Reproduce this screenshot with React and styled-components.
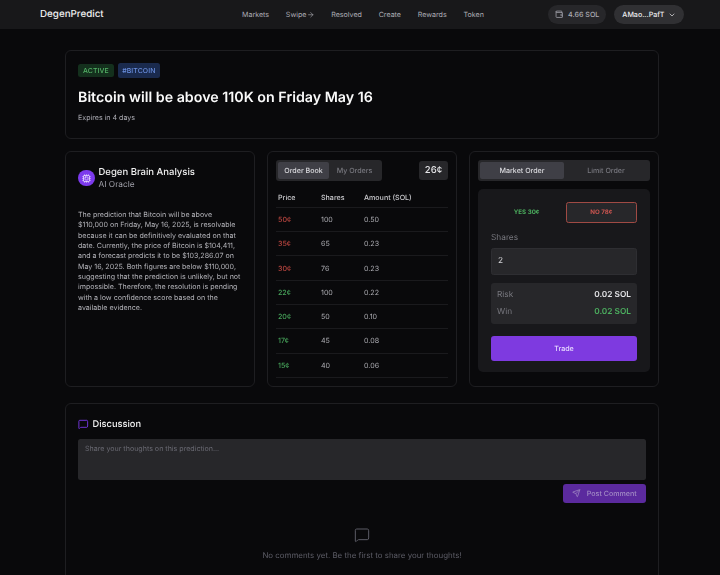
import React from "react";
import styled, { createGlobalStyle } from "styled-components";
import { Wallet, ChevronDown, Cpu, MessageSquare, Send, ArrowRight } from "lucide-react";

const Global = createGlobalStyle`
  html, body { margin: 0; padding: 0; background: #09090b; height: 100%; overflow: hidden; }
  * { box-sizing: border-box; }
  body { font-family: Inter, "Liberation Sans", sans-serif; color: #fafafa; text-rendering: geometricPrecision; }
`;
const Page = styled.div`filter: blur(0.3px); will-change: filter, opacity;`;
const Nav = styled.header`
  height: 29px; background: #18181a; display: flex; align-items: center; padding: 0 36px 0 40px;
`;
const Logo = styled.div`font-size: 9.8px; font-weight: 500; color: #f0f0f0; width: 202px; flex: none;`;
const Links = styled.nav`display: flex; gap: 16.8px; flex: none;`;
const NavLink = styled.span`font-size: 7.1px; font-weight: 400; color: #adadb5; display: flex; align-items: center; gap: 0.5px;`;
const NavRight = styled.div`margin-left: auto; display: flex; gap: 8.5px; align-items: center;`;
const Balance = styled.div`
  height: 19px; border-radius: 10px; background: #27272a; padding: 0 6.5px; display: flex; align-items: center; gap: 5px;
  font-size: 7.1px; color: #adadb5; font-weight: 500;
`;
const Account = styled(Balance)`background: #303033; color: #ececef; gap: 3.5px; padding: 0 8px;`;
const Main = styled.main`padding: 21px 61px 0 65px; display: flex; flex-direction: column;`;
const Card = styled.section`
  border: 1px solid #1e1e21; border-radius: 6px; padding: 11.5px 12px;
`;
const Tags = styled.div`display: flex; gap: 4.5px; align-items: center;`;
const Tag = styled.span`
  font-size: 6.9px; line-height: 9px; font-weight: 500; letter-spacing: .1px; border-radius: 2.5px; padding: ${p => p.$blue ? "3px 4px" : "2px 5px"};
  color: ${p => p.$blue ? "#6a8fe0" : "#55b568"}; background: ${p => p.$blue ? "#1a2a4d" : "#14301d"};
`;
const Title = styled.h1`margin: 10px 0 0; font-size: 14.25px; line-height: 20px; font-weight: 600; color: #fafafa;`;
const Expires = styled.p`margin: 5px 0 4px; font-size: 7.1px; line-height: 10px; color: #adadb5;`;
const Grid = styled.div`display: grid; grid-template-columns: repeat(3, 190px); gap: 12px; margin-top: 12px; height: 236px;`;
const BrainCard = styled(Card)`padding-top: 13.5px;`;
const BrainHead = styled.div`display: flex; align-items: center; gap: 4px;`;
const Badge = styled.div`width: 16.5px; height: 16.5px; border-radius: 50%; background: #7c3aed; display: flex; align-items: center; justify-content: center; flex: none;`;
const BrainTitle = styled.div`font-size: 9.5px; line-height: 13px; font-weight: 500; color: #f0f0f0;`;
const BrainSub = styled.div`font-size: 8.3px; line-height: 12px; color: #a1a1aa;`;
const BrainText = styled.p`margin: 19.5px 0 0; font-size: 7.1px; line-height: 10.33px; color: #b4b4ba; width: 165px;`;
const OrderCard = styled(Card)`padding: 8.3px 8px;`;
const OrderTop = styled.div`display: flex; justify-content: space-between; align-items: center;`;
const Tabs = styled.div`display: flex; background: #27272a; border-radius: 3px; padding: 2px; height: 20.5px; ${p => p.$full && "width: 100%;"}`;
const Tab = styled.div`
  display: flex; align-items: center; justify-content: center; border-radius: 2px;
  font-size: 7.1px; font-weight: 500; ${p => p.$full ? "flex: 1;" : "width: 51px;"}
  background: ${p => p.$active ? "#3f3f46" : "transparent"}; color: ${p => p.$active ? "#dcdce0" : "#78787f"};
`;
const Price = styled.div`background: #27272a; border-radius: 3px; height: 19px; width: 29px; display: flex; align-items: center; justify-content: center; font-size: 9.5px; font-weight: 500; color: #e4e4e7;`;
const Table = styled.div`margin-top: 7px;`;
const Row = styled.div`
  display: grid; grid-template-columns: 43px 43px 1fr; align-items: center; height: ${p => p.$head ? "20px" : "24.3px"};
  border-bottom: 1px solid #1a1a1d; padding-left: 2px;
  font-size: 7.1px; color: ${p => p.$head ? "#cdcdd1" : "#adadb3"}; font-weight: ${p => p.$head ? 500 : 400};
`;
const Cell = styled.span`color: ${p => p.$c || "inherit"}; font-weight: ${p => p.$c ? 500 : "inherit"};`;
const TradeCard = styled(Card)`padding: 8.3px 8px;`;
const TradeBox = styled.div`margin-top: 8px; background: #18181b; border-radius: 5px; padding: 13px 13px; height: 183px;`;
const Sides = styled.div`display: grid; grid-template-columns: 1fr 1fr; gap: 3.4px; height: 21px;`;
const Side = styled.div`
  display: flex; align-items: center; justify-content: center; font-size: 6.2px; font-weight: 700; border-radius: 2.5px;
  color: ${p => p.$no ? "#c8544f" : "#4caf5f"}; border: 1px solid ${p => p.$no ? "#a04a44" : "transparent"};
  background: ${p => p.$no ? "#27272a" : "transparent"};
`;
const Label = styled.div`margin-top: 9.5px; font-size: 8.3px; line-height: 12px; color: #78787f;`;
const Input = styled.div`margin-top: 3.5px; height: 27px; border-radius: 2.5px; background: #27272a; border: 1px solid #2e2e32; padding-left: 6px; display: flex; align-items: center; font-size: 8.3px; color: #d4d4d8;`;
const Summary = styled.div`margin-top: 8px; background: #27272a; border-radius: 3px; padding: 6.5px 6px 6px; display: flex; flex-direction: column; gap: 4.5px; height: 41px;`;
const SumRow = styled.div`display: flex; justify-content: space-between; align-items: center; line-height: 12px; font-size: 8.3px; color: #78787f;`;
const SumVal = styled.span`font-weight: 600; color: ${p => p.$green ? "#4caf5f" : "#e4e4e7"};`;
const TradeBtn = styled.div`margin-top: 12.5px; height: 25px; background: #7e3ae0; border-radius: 3px; display: flex; align-items: center; justify-content: center; font-size: 7.1px; font-weight: 500; color: #e9ddff;`;
const Discussion = styled(Card)`margin-top: 16px; height: 300px; padding: 13px 12px;`;
const DiscHead = styled.div`display: flex; align-items: center; gap: 4px; height: 14px;`;
const DiscTitle = styled.h2`margin: 0; font-size: 9.3px; font-weight: 500; color: #f4f4f4;`;
const Area = styled.div`margin-top: 7.5px; height: 41.5px; background: #27272a; border-radius: 2.5px; padding: 5px 7px; font-size: 7.1px; line-height: 10px; color: #696972;`;
const PostWrap = styled.div`display: flex; justify-content: flex-end; margin-top: 4px;`;
const PostBtn = styled.div`height: 19px; width: 83px; background: #5b2a9e; border-radius: 3px; display: flex; align-items: center; justify-content: center; gap: 6px; font-size: 7.1px; font-weight: 500; color: #a38cc5;`;
const Empty = styled.div`margin-top: 24px; display: flex; flex-direction: column; align-items: center; gap: 6px; color: #5c5c66; font-size: 7.9px; line-height: 12px;`;

const rows = [["50¢","100","0.50","#b8453f"],["35¢","65","0.23","#b8453f"],["30¢","76","0.23","#b8453f"],["22¢","100","0.22","#46a35a"],["20¢","50","0.10","#46a35a"],["17¢","45","0.08","#46a35a"],["15¢","40","0.06","#46a35a"]];

export default function App() {
  return (
    <Page>
      <Global />
      <Nav>
        <Logo>DegenPredict</Logo>
        <Links>
          <NavLink>Markets</NavLink>
          <NavLink>Swipe <ArrowRight size={7.5} /></NavLink>
          <NavLink>Resolved</NavLink>
          <NavLink>Create</NavLink>
          <NavLink>Rewards</NavLink>
          <NavLink>Token</NavLink>
        </Links>
        <NavRight>
          <Balance><Wallet size={8.5} />4.66 SOL</Balance>
          <Account>AMao...PafT <ChevronDown size={8} /></Account>
        </NavRight>
      </Nav>
      <Main>
        <Card>
          <Tags><Tag>ACTIVE</Tag><Tag $blue>#BITCOIN</Tag></Tags>
          <Title>Bitcoin will be above 110K on Friday May 16</Title>
          <Expires>Expires in 4 days</Expires>
        </Card>
        <Grid>
          <BrainCard>
            <BrainHead>
              <Badge><Cpu size={9} color="#e9ddff" /></Badge>
              <div><BrainTitle>Degen Brain Analysis</BrainTitle><BrainSub>AI Oracle</BrainSub></div>
            </BrainHead>
            <BrainText>The prediction that Bitcoin will be above $110,000 on Friday, May 16, 2025, is resolvable because it can be definitively evaluated on that date. Currently, the price of Bitcoin is $104,411, and a forecast predicts it to be $103,286.07 on May 16, 2025. Both figures are below $110,000, suggesting that the prediction is unlikely, but not impossible. Therefore, the resolution is pending with a low confidence score based on the available evidence.</BrainText>
          </BrainCard>
          <OrderCard>
            <OrderTop>
              <Tabs><Tab $active>Order Book</Tab><Tab>My Orders</Tab></Tabs>
              <Price>26¢</Price>
            </OrderTop>
            <Table>
              <Row $head><span>Price</span><span>Shares</span><span>Amount (SOL)</span></Row>
              {rows.map(r => <Row key={r[0]}><Cell $c={r[3]}>{r[0]}</Cell><span>{r[1]}</span><span>{r[2]}</span></Row>)}
            </Table>
          </OrderCard>
          <TradeCard>
            <Tabs $full><Tab $active $full>Market Order</Tab><Tab $full>Limit Order</Tab></Tabs>
            <TradeBox>
              <Sides><Side>YES 30¢</Side><Side $no>NO 78¢</Side></Sides>
              <Label>Shares</Label>
              <Input>2</Input>
              <Summary>
                <SumRow><span>Risk</span><SumVal>0.02 SOL</SumVal></SumRow>
                <SumRow><span>Win</span><SumVal $green>0.02 SOL</SumVal></SumRow>
              </Summary>
              <TradeBtn>Trade</TradeBtn>
            </TradeBox>
          </TradeCard>
        </Grid>
        <Discussion>
          <DiscHead><MessageSquare size={10.5} color="#7c3aed" /><DiscTitle>Discussion</DiscTitle></DiscHead>
          <Area>Share your thoughts on this prediction...</Area>
          <PostWrap><PostBtn><Send size={8.5} />Post Comment</PostBtn></PostWrap>
          <Empty><MessageSquare size={16} strokeWidth={1.5} /><span>No comments yet. Be the first to share your thoughts!</span></Empty>
        </Discussion>
      </Main>
    </Page>
  );
}
